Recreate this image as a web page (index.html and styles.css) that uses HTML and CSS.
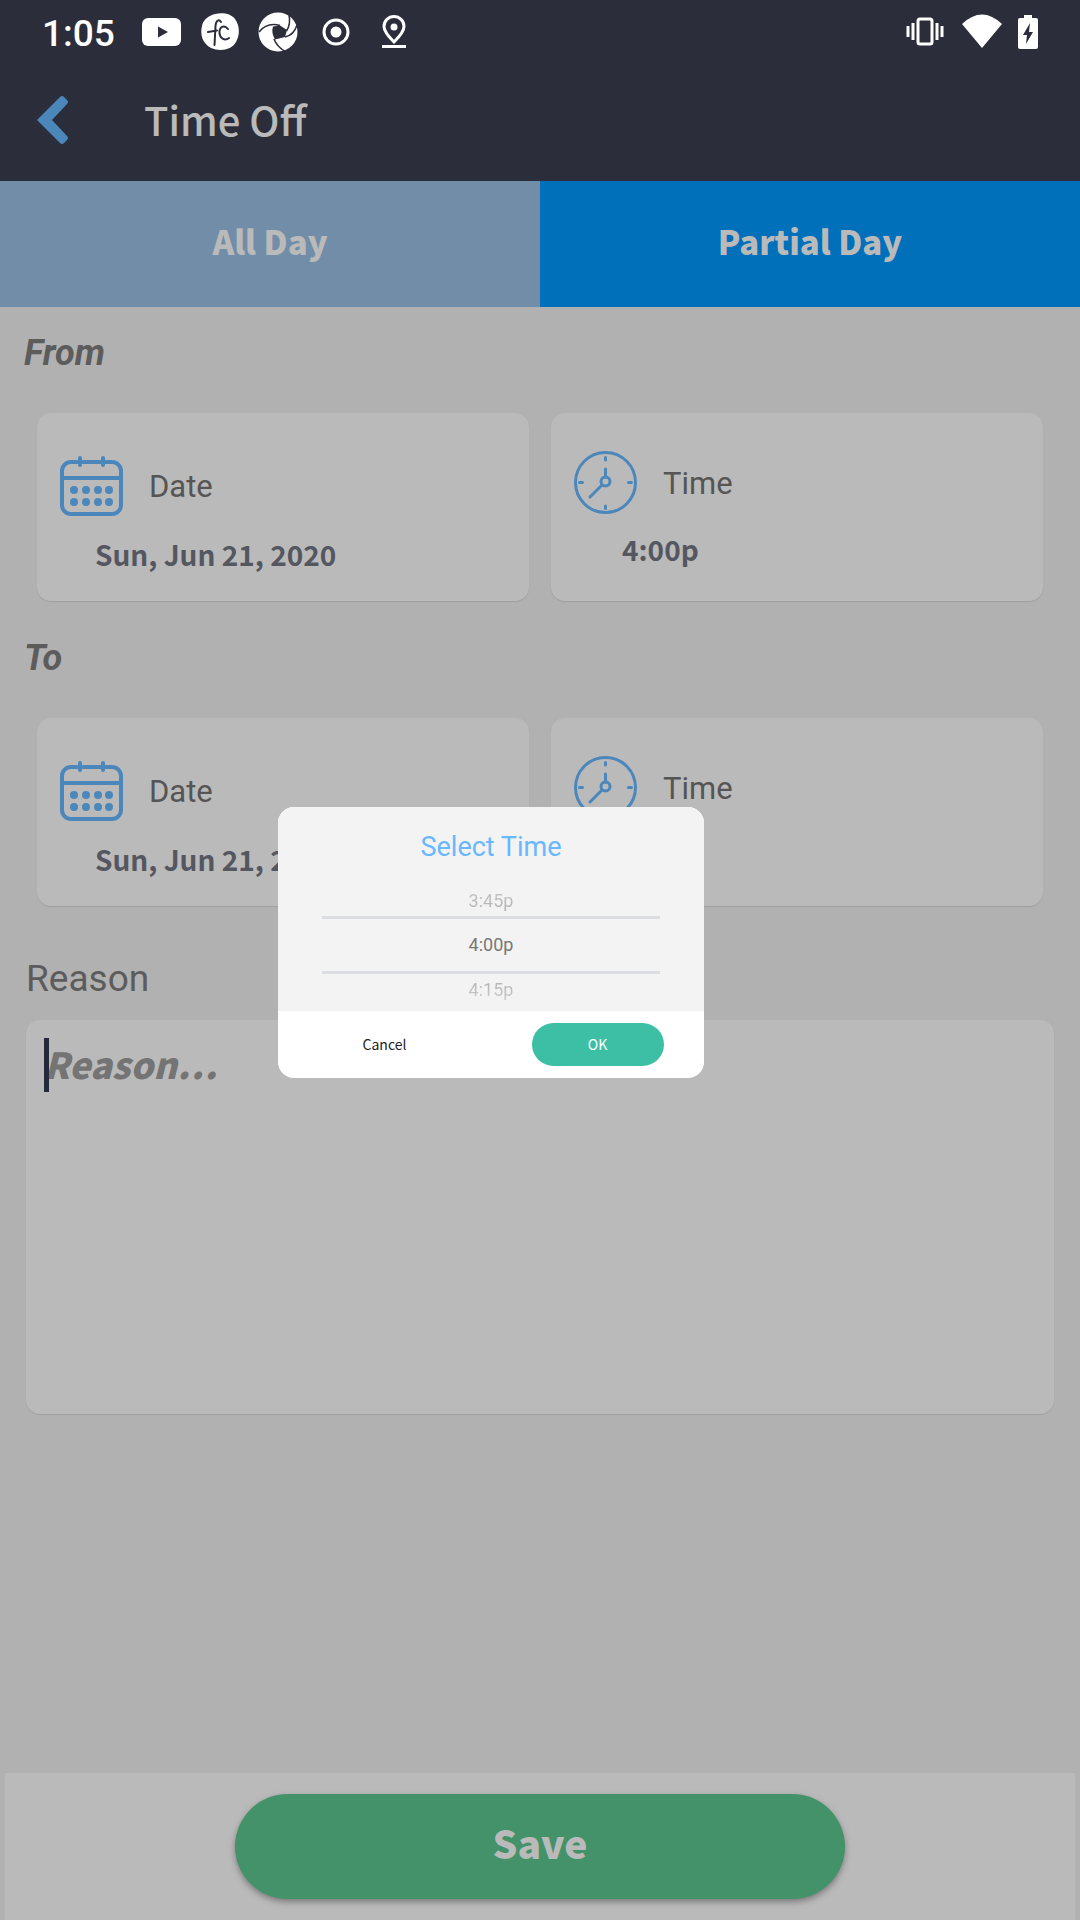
FILE: index.html
```html
<!DOCTYPE html>
<html lang="en">
<head>
<meta charset="utf-8">
<meta name="viewport" content="width=device-width, initial-scale=1">
<title>Time Off</title>
<link rel="stylesheet" href="styles.css">
</head>
<body>
<svg class="defs" aria-hidden="true">
  <symbol id="calendar" viewBox="0 0 63 63">
    <g fill="none" stroke="currentColor" stroke-width="4" stroke-linecap="round">
      <rect x="2" y="8" width="59" height="52" rx="9"/>
      <path d="M2 24H61M20 4V11M43 4V11"/>
    </g>
    <g fill="currentColor">
      <circle cx="14" cy="36" r="4"/><circle cx="26" cy="36" r="4"/><circle cx="38" cy="36" r="4"/><circle cx="49" cy="36" r="4"/>
      <circle cx="14" cy="48" r="4"/><circle cx="26" cy="48" r="4"/><circle cx="38" cy="48" r="4"/><circle cx="49" cy="48" r="4"/>
    </g>
  </symbol>
  <symbol id="clock" viewBox="0 0 63 63">
    <g fill="none" stroke="currentColor" stroke-width="3" stroke-linecap="round">
      <circle cx="31.500" cy="31.500" r="30"/>
      <circle cx="31.500" cy="30.500" r="4.500"/>
      <path d="M31.500 26V18M28 34L16 46M31.500 6.500V9M31.500 55V57.500M5.500 31.500H8.500M54.500 31.500H57.500"/>
    </g>
  </symbol>
</svg>

<div class="screen">
  <div class="statusbar">
    <span class="statusbar-time">1:05</span>
    <div class="statusbar-icons">
      <svg viewBox="0 0 40 40"><rect x="0" y="6" width="39" height="28" rx="6" fill="#fff"/><path d="M16 14.500L26 20L16 25.500Z" fill="#2b2e3a"/></svg>
      <svg viewBox="0 0 40 40"><path d="M10 4C17 0 30 0 35 7C40 14 40 23 36 30C32 38 20 40 11 36C2 31 0 22 2 14C3 9 6 6 10 4Z" fill="#fff"/><path d="M21 10C19 7 16 8 15.500 14L14.500 33M8 20L17 18.500M28 17C24 12 19 15 19.500 21C20 27 25 29 29 26" fill="none" stroke="#2b2e3a" stroke-width="2" stroke-linecap="round"/></svg>
      <svg viewBox="0 0 40 40"><circle cx="20" cy="20" r="19.500" fill="#fff"/><path d="M15 14.500L22 13.500L29 18L27 25L17 27.500Q13 21 15 14.500Z" fill="#2b2e3a"/><g fill="none" stroke="#2b2e3a" stroke-width="1.500"><path d="M22 13.500Q9 10 1 20"/><path d="M28.500 19Q33 12 31 3"/><path d="M27 25Q36 23 39 13"/><path d="M16 27Q19 35 28 40"/></g></svg>
      <svg viewBox="0 0 40 40"><circle cx="20" cy="20" r="12" fill="none" stroke="#fff" stroke-width="3"/><circle cx="20" cy="20" r="5.500" fill="#fff"/></svg>
      <svg viewBox="0 0 40 40"><path d="M20 30C14 24 10 19 10 14.500A10 10 0 0 1 30 14.500C30 19 26 24 20 30Z" fill="none" stroke="#fff" stroke-width="3"/><circle cx="20" cy="15" r="3.500" fill="#fff"/><path d="M8 34.500H32" stroke="#fff" stroke-width="3"/></svg>
    </div>
    <div class="statusbar-system">
      <svg class="vibrate" viewBox="0 0 38 40"><g fill="none" stroke="#fff" stroke-width="3"><rect x="12" y="7" width="14" height="25" rx="2"/><path d="M7 11V28M2 14V25M31 11V28M36 14V25"/></g></svg>
      <svg class="wifi" viewBox="0 0 40 40"><path d="M0 12Q20 -7 40 12L20 36Z" fill="#fff"/></svg>
      <svg class="battery" viewBox="0 0 20 40"><path d="M6 3H14V6H18Q20 6 20 8V35Q20 37 18 37H2Q0 37 0 35V8Q0 6 2 6H6Z" fill="#fff"/><path d="M12 11L5 23H9L8 32L15 20H11Z" fill="#2b2e3a"/></svg>
    </div>
  </div>

  <header class="header">
    <button class="back" type="button" aria-label="Back">
      <svg viewBox="0 0 32 48"><path d="M0 24L23 1Q25 -1 27 1L30 4Q32 6 30 8L15 24L30 40Q32 42 30 44L27 47Q25 49 23 47Z" fill="#4c87bb"/></svg>
    </button>
    <h1 class="title">Time Off</h1>
  </header>

  <nav class="tabs">
    <button class="tab" type="button">All Day</button>
    <button class="tab tab-active" type="button">Partial Day</button>
  </nav>

  <main class="content">
    <section class="range">
      <h2 class="range-title">From</h2>
      <div class="cards">
        <button class="card card-date" type="button">
          <span class="card-head"><svg class="card-icon"><use href="#calendar"/></svg><span class="card-label">Date</span></span>
          <span class="card-value">Sun, Jun 21, 2020</span>
        </button>
        <button class="card card-time" type="button">
          <span class="card-head"><svg class="card-icon"><use href="#clock"/></svg><span class="card-label">Time</span></span>
          <span class="card-value">4:00p</span>
        </button>
      </div>
    </section>
    <section class="range">
      <h2 class="range-title">To</h2>
      <div class="cards">
        <button class="card card-date" type="button">
          <span class="card-head"><svg class="card-icon"><use href="#calendar"/></svg><span class="card-label">Date</span></span>
          <span class="card-value">Sun, Jun 21, 2020</span>
        </button>
        <button class="card card-time" type="button">
          <span class="card-head"><svg class="card-icon"><use href="#clock"/></svg><span class="card-label">Time</span></span>
        </button>
      </div>
    </section>
    <section class="reason">
      <label class="reason-label" for="reason">Reason</label>
      <div class="reason-box">
        <textarea class="reason-input" id="reason" placeholder="Reason…"></textarea>
        <span class="caret"></span>
      </div>
    </section>
  </main>

  <footer class="footer">
    <button class="save" type="button">Save</button>
  </footer>

  <div class="overlay">
    <div class="dialog" role="dialog" aria-labelledby="dialog-title">
      <div class="dialog-body">
        <h2 class="dialog-title" id="dialog-title">Select Time</h2>
        <div class="wheel">
          <div class="wheel-prev">3:45p</div>
          <div class="wheel-current">4:00p</div>
          <div class="wheel-next">4:15p</div>
        </div>
      </div>
      <div class="dialog-actions">
        <button class="cancel" type="button">Cancel</button>
        <button class="ok" type="button">OK</button>
      </div>
    </div>
  </div>
</div>
</body>
</html>
```
FILE: styles.css
```css
:root {
  --dark: #2b2e3a;
  --page: #b1b1b1;
  --surface: #bababa;
  --blue: #4c87bb;
  --source: "Noto Sans CJK SC", "Noto Sans", sans-serif;
  --roboto: Roboto, "Noto Sans", sans-serif;
}

* {
  box-sizing: border-box;
}

body {
  margin: 0;
  background: var(--page);
  font-family: var(--source);
}

h1,
h2 {
  margin: 0;
}

button {
  margin: 0;
  padding: 0;
  border: 0;
  background: none;
  color: inherit;
  font: inherit;
}

svg {
  display: block;
}

.defs {
  position: absolute;
  width: 0;
  height: 0;
}

.screen {
  position: relative;
  display: flex;
  flex-direction: column;
  min-height: 100vh;
}

.statusbar {
  display: flex;
  align-items: center;
  height: 63px;
  padding: 0 42px;
  background: var(--dark);
  color: #fff;
}

.statusbar-time {
  width: 100px;
  padding-top: 4px;
  font: 500 37px/40px var(--roboto);
}

.statusbar-icons {
  display: flex;
  gap: 18px;
}

.statusbar-icons svg {
  width: 40px;
  height: 40px;
}

.statusbar-system {
  display: flex;
  gap: 16px;
  margin-left: auto;
}

.statusbar-system svg {
  height: 40px;
}

.vibrate {
  width: 38px;
  margin-right: 2px;
}

.wifi {
  width: 40px;
}

.battery {
  width: 20px;
}

.header {
  display: flex;
  align-items: center;
  gap: 75px;
  height: 118px;
  padding: 0 37px 4px;
  background: var(--dark);
}

.back svg {
  width: 32px;
  height: 48px;
}

.title {
  padding-bottom: 3px;
  color: var(--surface);
  font-size: 40px;
  font-weight: 500;
  line-height: 48px;
}

.tabs {
  display: flex;
}

.tab {
  flex: 1;
  height: 126px;
  padding-bottom: 6px;
  background: #728da8;
  color: var(--surface);
  font-size: 33px;
  font-weight: 900;
}

.tab-active {
  background: #0070bb;
}

.content {
  flex: 1;
  padding-top: 22px;
}

.range {
  padding: 0 37px;
  margin-bottom: 33px;
}

.range-title {
  margin: 0 -13px 36px;
  color: #5c5c5c;
  font: italic 700 36px/48px var(--roboto);
}

.cards {
  display: grid;
  grid-template-columns: 1fr 1fr;
  gap: 22px;
}

.card {
  display: flex;
  flex-direction: column;
  height: 188px;
  padding: 0 23px;
  border-radius: 14px;
  background: var(--surface);
  box-shadow: 0 1px 1px #9f9f9f;
  text-align: left;
}

.card-date {
  gap: 17px;
  padding-top: 41px;
}

.card-time {
  gap: 15px;
  padding-top: 38px;
}

.card-head {
  display: flex;
  align-items: center;
  gap: 26px;
}

.card-label {
  padding-top: 3px;
  color: #555;
  font: 400 31px/40px var(--roboto);
}

.card-icon {
  width: 63px;
  height: 63px;
  color: var(--blue);
}

.card-value {
  color: #545760;
  font-size: 28px;
  font-weight: 700;
  line-height: 40px;
}

.card-date .card-value {
  padding-left: 35px;
}

.card-time .card-value {
  padding-left: 48px;
}

.reason {
  padding: 16px 26px 0;
}

.reason-label {
  display: block;
  margin-bottom: 17px;
  color: #5c5c5c;
  font: 400 37px/48px var(--roboto);
}

.reason-box {
  position: relative;
}

.reason-input {
  display: block;
  width: 100%;
  height: 394px;
  padding: 17px 18px;
  border: 0;
  border-radius: 14px;
  outline: 0;
  resize: none;
  background: var(--surface);
  box-shadow: 0 1px 1px #9f9f9f;
  color: var(--dark);
  font: italic 900 36px/52px var(--source);
}

.reason-input::placeholder {
  color: #747474;
  opacity: 1;
}

.caret {
  position: absolute;
  top: 18px;
  left: 18px;
  width: 5px;
  height: 54px;
  background: #252a3a;
}

.footer {
  display: flex;
  justify-content: center;
  margin: 0 5px;
  padding: 21px 0;
  background: var(--surface);
}

.save {
  width: 57%;
  height: 105px;
  padding-bottom: 10px;
  border-radius: 53px;
  background: #44926a;
  box-shadow: 0 3px 6px #7c7c7c;
  color: var(--surface);
  font-size: 39px;
  font-weight: 900;
}

.overlay {
  position: absolute;
  inset: 0;
  display: flex;
  align-items: center;
  justify-content: center;
  padding: 0 98px 35px 0;
}

.dialog {
  width: 426px;
  overflow: hidden;
  border-radius: 16px;
  background: #fff;
}

.dialog-body {
  padding: 20px 44px 5px;
  background: #f3f3f3;
  text-align: center;
}

.dialog-title {
  margin-bottom: 18px;
  color: #69b8ff;
  font: 400 27px/40px var(--roboto);
}

.wheel {
  font: 400 18px/32px var(--roboto);
}

.wheel-prev {
  margin-bottom: -1px;
  background: linear-gradient(#ccc, #aaa) text;
  color: transparent;
}

.wheel-current {
  padding: 10px 0;
  border: solid #dcdde3;
  border-width: 3px 0;
  color: #777;
}

.wheel-next {
  background: linear-gradient(#aaa, #d4d4d4) text;
  color: transparent;
}

.dialog-actions {
  display: grid;
  grid-template-columns: 1fr 1fr;
  place-items: center;
  padding: 12px 0;
}

.cancel,
.ok {
  width: 132px;
  height: 43px;
  padding-bottom: 2px;
  border-radius: 22px;
  color: #222;
  font-size: 14px;
}

.ok {
  background: #3dbfa5;
  color: #fff;
}
```
